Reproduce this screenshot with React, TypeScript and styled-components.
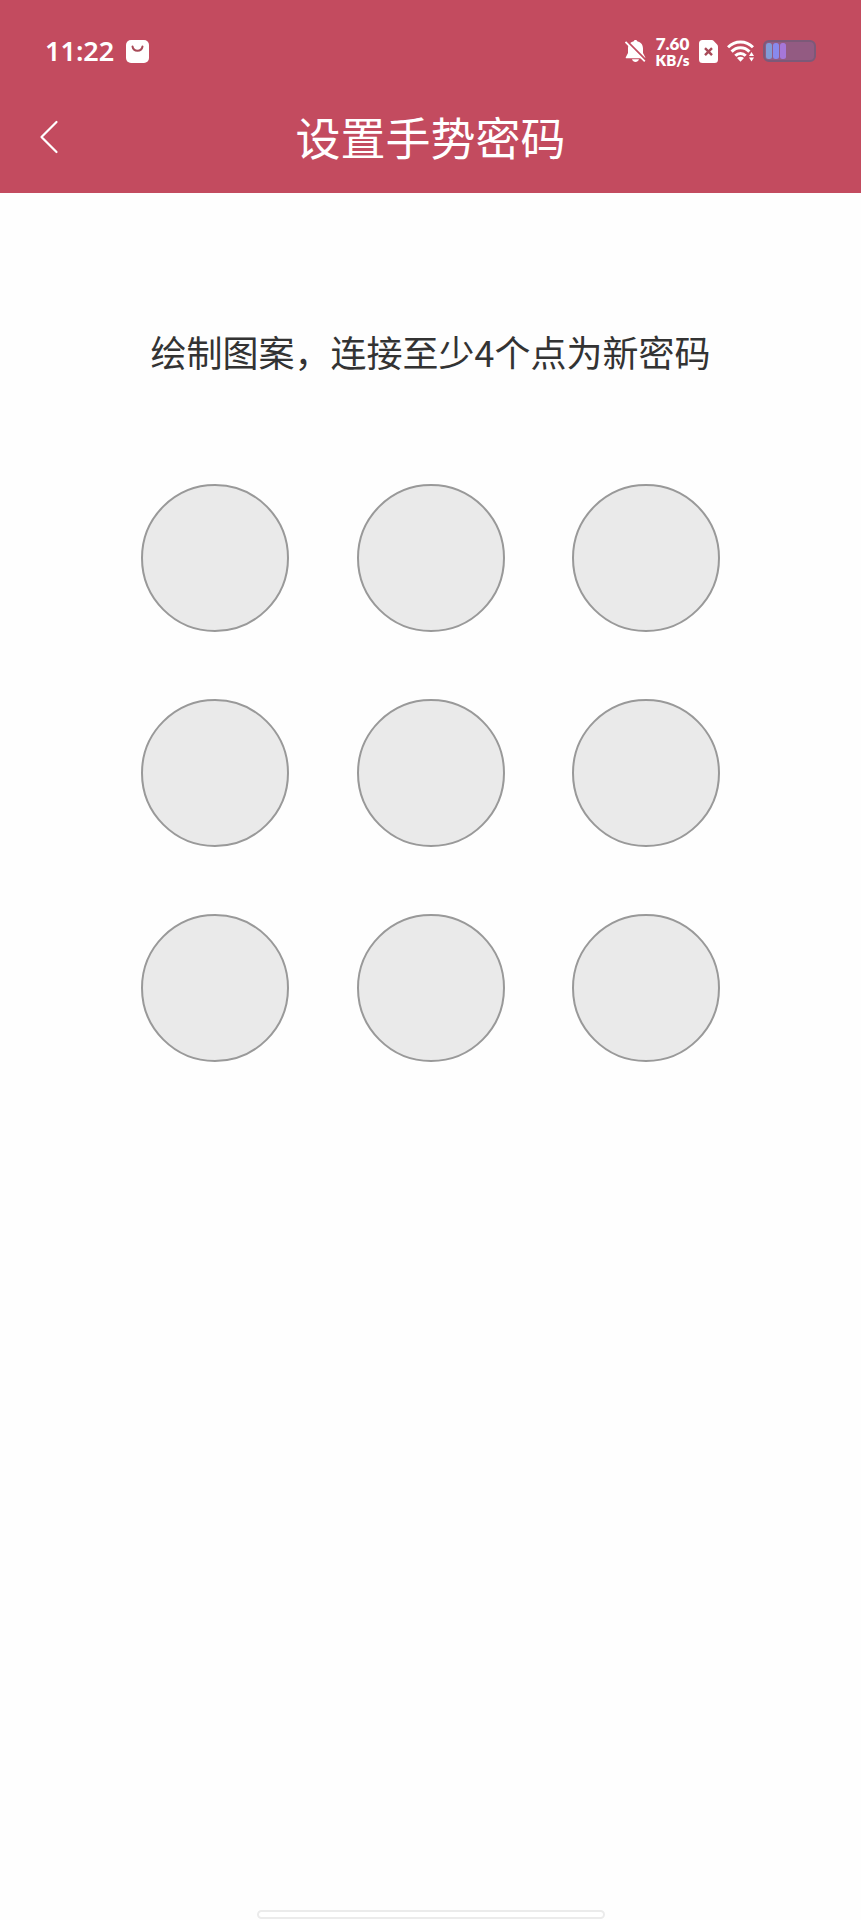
import React from "react";
import styled, { createGlobalStyle } from "styled-components";

const GlobalStyle = createGlobalStyle`
  *, *::before, *::after { box-sizing: border-box; }
  html, body, #root { height: 100%; }
  body {
    margin: 0;
    background: #fefefe;
    font-family: "Noto Sans", "Noto Sans CJK SC", sans-serif;
  }
`;

const Screen = styled.div`
  min-height: 100%;
  display: flex;
  flex-direction: column;
`;

const Header = styled.header`
  background: #c34b5f;
  color: #fff;
`;

const StatusBar = styled.div`
  display: flex;
  align-items: center;
  justify-content: space-between;
  height: 102px;
  padding: 0 45px;
`;

const StatusGroup = styled.div<{ $gap: number }>`
  display: flex;
  align-items: center;
  gap: ${(p) => p.$gap}px;

  svg { display: block; }
`;

const Clock = styled.time`
  font-size: 27px;
  font-weight: 600;
  line-height: 32px;
`;

const Speed = styled.div`
  display: flex;
  flex-direction: column;
  align-items: center;
  width: 35px;
  font-family: Lato, sans-serif;
  font-size: 17px;
  font-weight: 800;
  line-height: 17px;
`;

const SpeedUnit = styled.span`
  font-size: 15px;
  line-height: 16px;
`;

const NavBar = styled.div`
  display: grid;
  grid-template-columns: 96px 1fr 96px;
  align-items: center;
  height: 91px;
  padding-bottom: 22px;
`;

const BackButton = styled.button`
  display: flex;
  align-items: center;
  height: 64px;
  padding: 0 0 0 38px;
  border: 0;
  background: none;
  color: inherit;
`;

const Title = styled.h1`
  margin: 0;
  font-family: "Noto Sans CJK SC", sans-serif;
  font-size: 45px;
  font-weight: 400;
  line-height: 64px;
  text-align: center;
`;

const Main = styled.main`
  flex: 1;
  padding-top: 134px;
`;

const Hint = styled.p`
  margin: 0 0 75px;
  color: #333;
  font-family: "Noto Sans CJK SC", sans-serif;
  font-size: 36px;
  line-height: 48px;
  text-align: center;
`;

const PatternGrid = styled.div`
  display: grid;
  grid-template-columns: repeat(3, 1fr);
  width: 75%;
  margin: 0 auto;
`;

const PatternCell = styled.div`
  display: grid;
  place-items: center;
  aspect-ratio: 1;
`;

const PatternDot = styled.button`
  width: 148px;
  height: 148px;
  padding: 0;
  border: 2px solid #999;
  border-radius: 50%;
  background: #eaeaea;
`;

const HomeArea = styled.footer`
  display: flex;
  justify-content: center;
  padding-bottom: 1px;
`;

const HomeIndicator = styled.div`
  width: 348px;
  height: 9px;
  border: 2px solid #ebebeb;
  border-radius: 5px;
  background: #fff;
`;

const BagIcon = () => (
  <svg width="23" height="23" viewBox="0 0 23 23" aria-hidden="true">
    <rect width="23" height="23" rx="5" fill="#fff" />
    <path d="M6.500 6.500c1 5.600 9 5.600 10 0" fill="none" stroke="#a84a58" strokeWidth="2" strokeLinecap="round" />
  </svg>
);

const MutedBellIcon = () => (
  <svg width="21" height="24" viewBox="0 0 21 24" aria-hidden="true">
    <path
      d="M10.5 1c-.9 0-1.5.5-1.7 1.2C5 3 3 5.800 3 9.500V14L.8 18.200c-.3.600 0 1 .6 1h18.200c.6 0 .9-.4.600-1L18 14V9.500c0-3.700-2-6.500-5.800-7.300C12 1.500 11.400 1 10.500 1zM7 20.300c.6 1.800 1.900 2.700 3.500 2.700s2.900-.9 3.500-2.700z"
      fill="#fff"
    />
    <path d="M1.500 1.700L21 21.200" stroke="#c34b5f" strokeWidth="2.200" />
    <path d="M.5 3L19.800 22.300" stroke="#fff" strokeWidth="1.800" />
  </svg>
);

const SimIcon = () => (
  <svg width="19" height="23" viewBox="0 0 19 23" aria-hidden="true">
    <path d="M3.500 0h9.300c.8 0 1.500.3 2 .9l3.300 3.700c.6.6.9 1.300.9 2.100V19.500a3.500 3.500 0 0 1-3.500 3.500h-12A3.500 3.500 0 0 1 0 19.500v-16A3.500 3.500 0 0 1 3.500 0z" fill="#fff" />
    <path d="M6 8.200l7 7M13 8.200l-7 7" stroke="#a84a58" strokeWidth="2.400" />
  </svg>
);

const WifiIcon = () => (
  <svg width="27" height="22" viewBox="0 0 27 22" aria-hidden="true">
    <g fill="none" stroke="#fff" strokeWidth="3">
      <path d="M1 7.300C8 .1 19 .1 26 7.300" />
      <path d="M4.600 11.600c5-5.200 12.800-5.200 17.800 0" />
      <path d="M8.300 15.800c3-3.100 7.400-3.100 10.400 0" />
    </g>
    <path d="M10 18c2-1.700 5-1.700 7 0L13.500 21.700z" fill="#fff" />
    <path d="M24.500 12l2.500 4h-5zM24.500 21.500l2.500-4h-5z" fill="#fff" />
  </svg>
);

const BatteryIcon = () => (
  <svg width="53" height="22" viewBox="0 0 53 22" aria-hidden="true">
    <rect x="1" y="1" width="51" height="20" rx="5" fill="#935b82" stroke="#7c5978" strokeWidth="2" />
    <rect x="3" y="3" width="6" height="16" rx="2.500" fill="#829bd7" />
    <rect x="10" y="3" width="6" height="16" rx="2.500" fill="#8989ec" />
    <rect x="17" y="3" width="6" height="16" rx="2.500" fill="#a677d9" />
  </svg>
);

const BackIcon = () => (
  <svg width="21" height="34" viewBox="0 0 21 34" aria-hidden="true">
    <path d="M18.500 2L3.500 17l15 15" fill="none" stroke="#fff" strokeWidth="2.200" strokeLinecap="round" strokeLinejoin="round" />
  </svg>
);

const DOTS = [1, 2, 3, 4, 5, 6, 7, 8, 9];

export default function App() {
  return (
    <>
      <GlobalStyle />
      <Screen>
        <Header>
          <StatusBar>
            <StatusGroup $gap={12}>
              <Clock>11:22</Clock>
              <BagIcon />
            </StatusGroup>
            <StatusGroup $gap={9}>
              <MutedBellIcon />
              <Speed>
                <span>7.60</span>
                <SpeedUnit>KB/s</SpeedUnit>
              </Speed>
              <SimIcon />
              <WifiIcon />
              <BatteryIcon />
            </StatusGroup>
          </StatusBar>
          <NavBar>
            <BackButton type="button" aria-label="返回">
              <BackIcon />
            </BackButton>
            <Title>设置手势密码</Title>
          </NavBar>
        </Header>
        <Main>
          <Hint>绘制图案，连接至少4个点为新密码</Hint>
          <PatternGrid>
            {DOTS.map((n) => (
              <PatternCell key={n}>
                <PatternDot type="button" aria-label={`${n}`} />
              </PatternCell>
            ))}
          </PatternGrid>
        </Main>
        <HomeArea>
          <HomeIndicator />
        </HomeArea>
      </Screen>
    </>
  );
}
